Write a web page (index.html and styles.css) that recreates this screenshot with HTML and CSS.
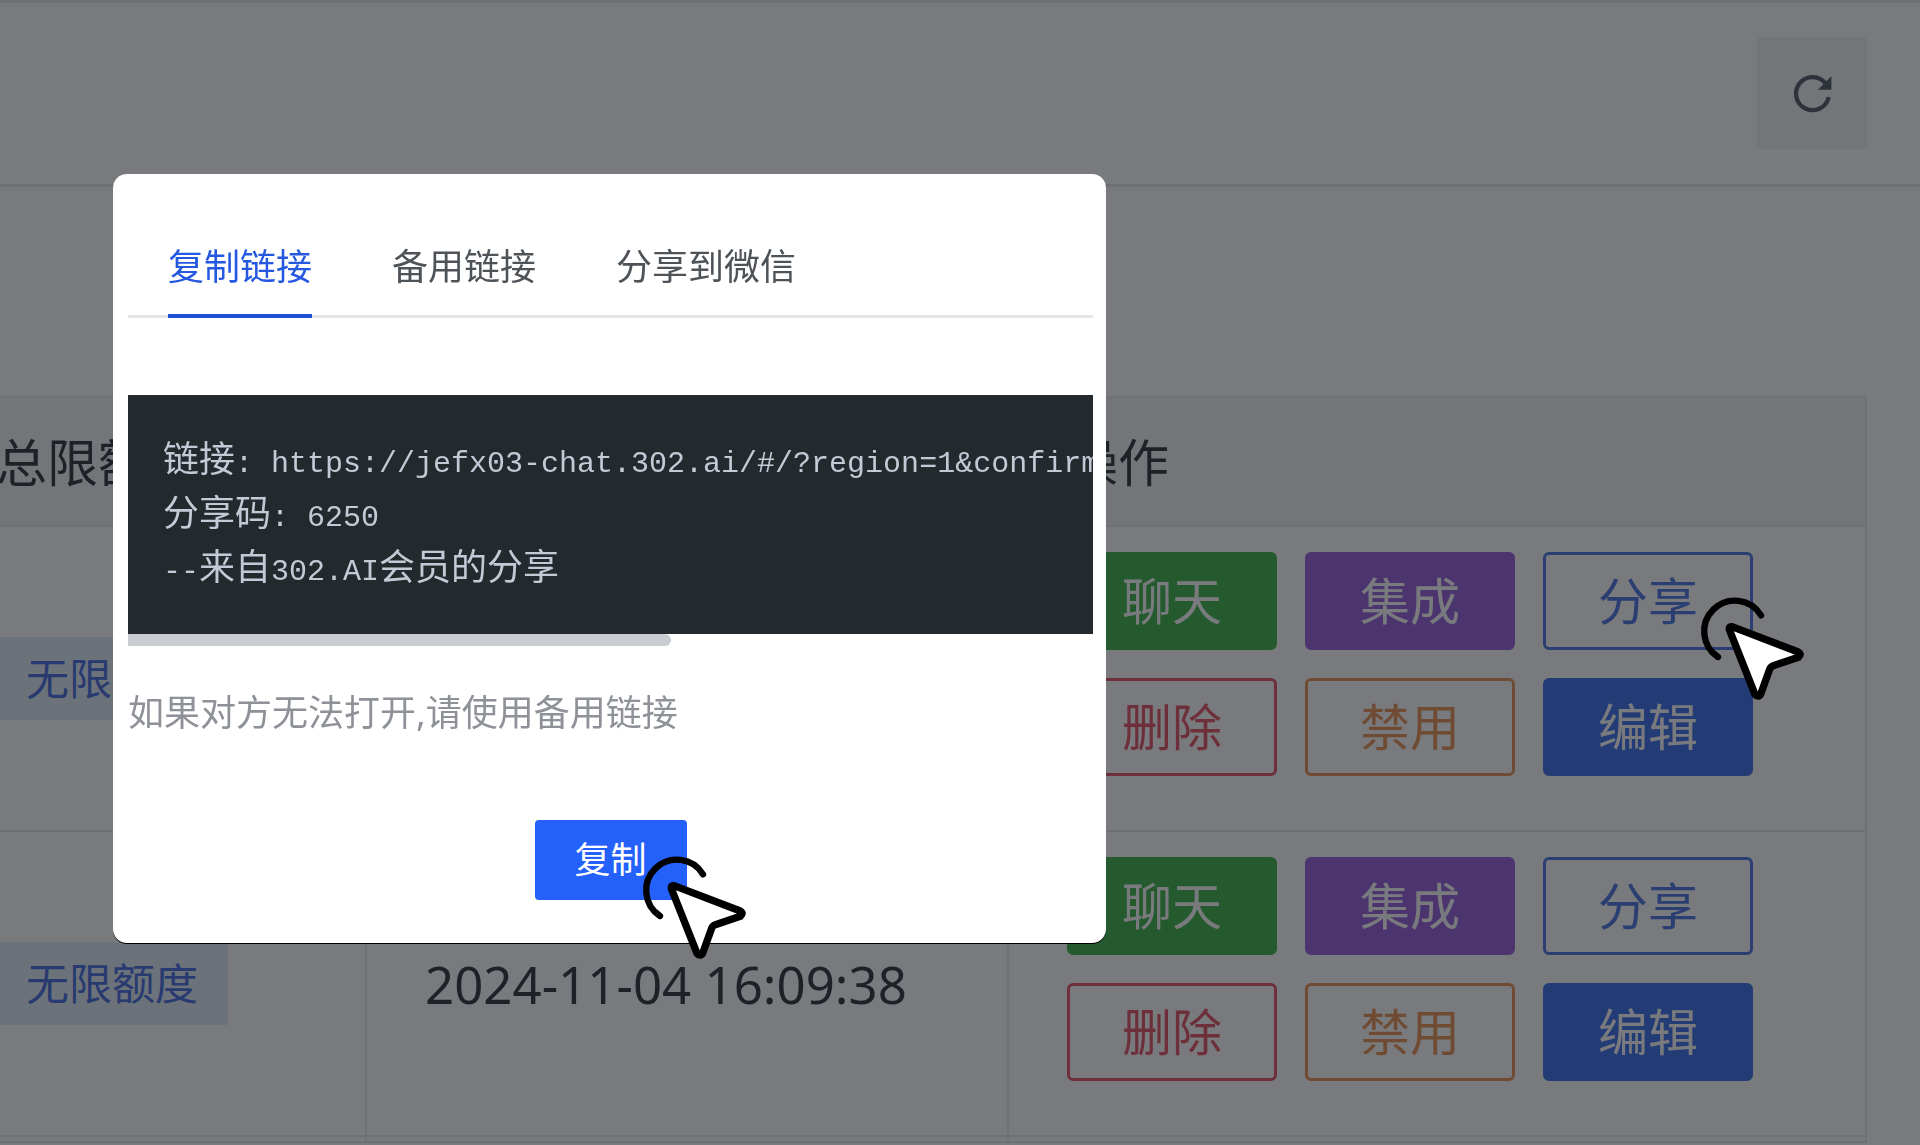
FILE: index.html
```html
<!DOCTYPE html>
<html lang="zh-CN">
<head>
    <meta charset="UTF-8">
    <meta name="viewport" content="width=device-width, initial-scale=1.0">
    <title>分享</title>
    <link rel="stylesheet" href="styles.css">
</head>
<body>
    <svg class="defs" aria-hidden="true">
        <symbol id="cursor" viewBox="0 0 330 330">
            <path d="M60 189 A92 92 0 1 1 189 64" fill="none" stroke="#000" stroke-width="19" stroke-linecap="round"/>
            <path d="M102 98 L301 174 Q312 181 301 190 L226 215 Q218 218 215 226 L188 301 Q180 312 171 301 L94 107 Q92 97 102 98 Z" fill="#fff" stroke="#000" stroke-width="22" stroke-linejoin="round"/>
        </symbol>
    </svg>

    <header class="toolbar">
        <button class="refresh" type="button" aria-label="刷新">
            <svg viewBox="270 215 130 130">
                <path d="M384 291 A50 50 0 1 1 375 250" fill="none" stroke="currentColor" stroke-width="13"/>
                <path d="M392 228 V269 H351 Z" fill="currentColor"/>
            </svg>
        </button>
    </header>

    <main class="list">
        <table>
            <colgroup>
                <col class="col-limit">
                <col class="col-time">
                <col>
            </colgroup>
            <thead>
                <tr>
                    <th>总限额</th>
                    <th></th>
                    <th>操作</th>
                </tr>
            </thead>
            <tbody>
                <tr>
                    <td><span class="tag">无限额度</span></td>
                    <td></td>
                    <td class="ops">
                        <div class="actions">
                            <button type="button" class="btn chat">聊天</button>
                            <button type="button" class="btn integrate">集成</button>
                            <button type="button" class="btn share">分享</button>
                            <button type="button" class="btn delete">删除</button>
                            <button type="button" class="btn disable">禁用</button>
                            <button type="button" class="btn edit">编辑</button>
                        </div>
                    </td>
                </tr>
                <tr>
                    <td><span class="tag">无限额度</span></td>
                    <td>2024-11-04 16:09:38</td>
                    <td class="ops">
                        <div class="actions">
                            <button type="button" class="btn chat">聊天</button>
                            <button type="button" class="btn integrate">集成</button>
                            <button type="button" class="btn share">分享</button>
                            <button type="button" class="btn delete">删除</button>
                            <button type="button" class="btn disable">禁用</button>
                            <button type="button" class="btn edit">编辑</button>
                        </div>
                    </td>
                </tr>
                <tr class="next">
                    <td></td>
                    <td></td>
                    <td></td>
                </tr>
            </tbody>
        </table>
    </main>

    <div class="mask">
        <svg class="cursor cursor-share" aria-hidden="true"><use href="#cursor"/></svg>

        <div class="modal" role="dialog" aria-modal="true">
            <div class="tabs" role="tablist">
                <button type="button" class="tab active" role="tab" aria-selected="true">复制链接</button>
                <button type="button" class="tab" role="tab">备用链接</button>
                <button type="button" class="tab" role="tab">分享到微信</button>
            </div>

            <div class="code-box">
                <pre><code>链接<span>: https://jefx03-chat.302.ai/#/?region=1&amp;confirm</span>
分享码<span>: 6250</span>
<span>--</span>来自<span>302.AI</span>会员的分享</code></pre>
                <div class="scrollbar"><div class="thumb"></div></div>
            </div>

            <p class="hint">如果对方无法打开,请使用备用链接</p>

            <div class="footer">
                <div class="copy-wrap">
                    <button type="button" class="copy">复制</button>
                    <svg class="cursor cursor-copy" aria-hidden="true"><use href="#cursor"/></svg>
                </div>
            </div>
        </div>
    </div>
</body>
</html>
```
FILE: styles.css
```css
* { box-sizing: border-box; }

body {
    margin: 0;
    height: 100vh;
    overflow: hidden;
    background: #fff;
    color: #1d2129;
    font-family: "Noto Sans", "Noto Sans CJK SC", sans-serif;
}
button { font-family: inherit; cursor: pointer; }
.defs { position: absolute; width: 0; height: 0; }

/* Toolbar */
.toolbar {
    display: flex;
    justify-content: flex-end;
    padding: 34px 53px 35px;
    border-top: 3px solid #e5e5e8;
    border-bottom: 3px solid #e5e5e8;
}
.refresh {
    display: flex;
    align-items: center;
    justify-content: center;
    width: 110px;
    height: 112px;
    padding: 0;
    border: none;
    border-radius: 4px;
    background: #f2f2f3;
    color: #444b58;
}
.refresh svg { width: 43px; height: 43px; }

/* Table, scrolled a little to the right */
.list { margin: 209px 53px 0 -62px; }
table {
    width: 100%;
    table-layout: fixed;
    border-collapse: separate;
    border-spacing: 0;
    font-size: 51px;
    line-height: 60px;
}
.col-limit { width: 429px; }
.col-time { width: 642px; }
th, td {
    padding: 0 58px;
    border-right: 2px solid #e5e5e8;
    border-bottom: 2px solid #e5e5e8;
    text-align: left;
    font-weight: 400;
    white-space: nowrap;
}
th {
    height: 131px;
    background: #f2f2f3;
    border-top: 2px solid #e9e9eb;
    border-right-color: #f2f2f3;
}
th:last-child { border-right-color: #e5e5e8; }
.ops { padding: 25px 58px 26px; }
.next td { height: 6px; }
.tag {
    display: inline-block;
    padding: 0 30px;
    background: #dfecf8;
    color: #3560dc;
    font-size: 43px;
    line-height: 83px;
    vertical-align: middle;
}
.actions {
    display: grid;
    grid-template-columns: repeat(3, 210px);
    gap: 28px;
    padding-bottom: 28px;
}
.btn {
    height: 98px;
    padding: 0;
    border: 3px solid;
    border-radius: 6px;
    background: transparent;
    font-size: 50px;
    line-height: 60px;
}
.chat { background: #2cae3a; border-color: #2cae3a; color: #fff; }
.integrate { background: #8e50dc; border-color: #8e50dc; color: #fff; }
.share { color: #3a6ae0; }
.delete { color: #e0485a; }
.disable { color: #e88a48; }
.edit { background: #2c64ec; border-color: #2c64ec; color: #fff; }

/* Share dialog */
.mask {
    position: fixed;
    inset: 0;
    background: rgba(32, 33, 38, 0.6);
}
.modal {
    position: absolute;
    top: 174px;
    left: 113px;
    width: calc(100% - 226px);
    max-width: 993px;
    padding: 66px 13px 43px 15px;
    border-radius: 14px;
    background: #fff;
    box-shadow: 0 1px 0 #000;
    font-size: 36px;
    line-height: 54px;
}
.tabs {
    display: flex;
    gap: 80px;
    padding: 0 40px;
    border-bottom: 3px solid #e5e6e8;
}
.tab {
    margin-bottom: -3px;
    padding: 0 0 20px;
    border: none;
    border-bottom: 4px solid transparent;
    background: none;
    color: #4e5358;
    font-size: 36px;
    line-height: 54px;
}
.tab.active { color: #2458e0; border-bottom-color: #1f50d8; }
.code-box { margin-top: 77px; }
pre {
    margin: 0;
    padding: 34px 35px 43px;
    overflow: hidden;
    background: #23292d;
    color: #c3cad6;
}
code {
    display: block;
    font-family: "Noto Sans CJK SC", sans-serif;
    font-size: 36px;
    line-height: 54px;
}
code span { font-family: "Liberation Mono", monospace; font-size: 30px; line-height: 1; }
.scrollbar { height: 12px; background: #fff; }
.thumb {
    width: 543px;
    height: 12px;
    border-radius: 0 6px 6px 0;
    background: #c9cdd2;
}
.hint { margin: 40px 0 80px; color: #8e9298; }
.footer { display: flex; justify-content: center; }
.copy-wrap { position: relative; }
.copy {
    display: block;
    width: 152px;
    height: 80px;
    padding: 0;
    border: none;
    border-radius: 4px;
    background: #2460fa;
    color: #fff;
    font-size: 36px;
    line-height: 54px;
}

.cursor { position: absolute; width: 110px; height: 110px; pointer-events: none; }
.cursor-copy { top: 33px; left: 105px; }
.cursor-share { top: 594px; right: 112px; }
```
